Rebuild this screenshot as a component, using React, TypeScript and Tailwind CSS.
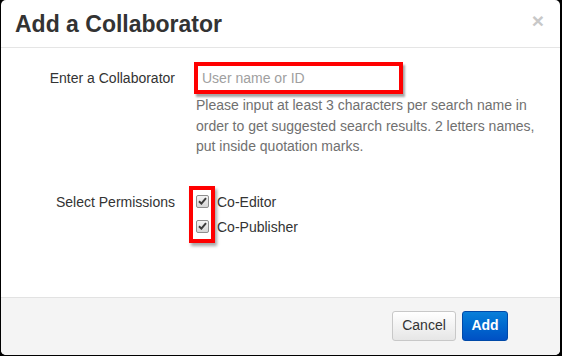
import React from "react"

function Check() {
  return (
    <span className="flex h-[13px] w-[13px] items-center justify-center rounded-[2px] border border-[#8e8e8e] bg-gradient-to-b from-[#f4f4f4] to-[#d6d6d6]">
      <svg width="9" height="8" viewBox="0 0 9 8">
        <path d="M1 4.2 L3.4 6.6 L8 1.2" fill="none" stroke="#3c3c3c" strokeWidth="2" />
      </svg>
    </span>
  )
}

export default function App() {
  return (
    <div className="h-[356px] w-[562px] bg-black pl-px pr-[2px] pb-px font-['Liberation_Sans',Arial,sans-serif] text-[14px] text-[#333]">
      <div className="flex h-full flex-col overflow-hidden rounded-[5px] bg-white">
        <div className="flex h-[48px] shrink-0 items-center justify-between border-b border-[#e5e5e5] pl-[14px] pr-[16px]">
          <h1 className="pt-[2px] text-[23px] font-bold text-[#333]">Add a Collaborator</h1>
          <span className="-mt-[6px] text-[21px] font-bold leading-none text-[#c8c8c8]">×</span>
        </div>

        <div className="flex-1 pt-[14px]">
          <div className="grid grid-cols-[174px_1fr] gap-x-[19px]">
            <div className="pt-[6px] text-right leading-[20px]">Enter a Collaborator</div>
            <div>
              <div className="h-[32px] w-[209px] border-4 border-[#ff0000] shadow-[2px_3px_2px_rgba(0,0,0,0.35)]">
                <input
                  className="h-full w-full bg-white px-[4px] text-[14px] text-[#333] outline-none placeholder:text-[#a0a0a0]"
                  placeholder="User name or ID"
                />
              </div>
              <p className="mt-[1px] pl-[2px] leading-[20.5px] text-[#707070]">
                Please input at least 3 characters per search name in
                <br />
                order to get suggested search results. 2 letters names,
                <br />
                put inside quotation marks.
              </p>
            </div>
          </div>

          <div className="mt-[29px] grid grid-cols-[174px_1fr] gap-x-[14px]">
            <div className="pt-[6px] text-right leading-[20px]">Select Permissions</div>
            <div className="flex items-start">
              <div className="flex w-[26px] flex-col items-center gap-[12px] border-4 border-[#ff0000] pt-[5px] pb-[6px] shadow-[2px_3px_3px_rgba(0,0,0,0.35)]">
                <Check />
                <Check />
              </div>
              <div className="flex flex-col pt-[6px] pl-[2px] leading-[20px]">
                <span>Co-Editor</span>
                <span className="mt-[5px]">Co-Publisher</span>
              </div>
            </div>
          </div>
        </div>

        <div className="flex h-[58px] shrink-0 items-center justify-end gap-[6px] border-t border-[#e2e2e2] bg-[#f4f4f4] pr-[52px] pb-[2px]">
          <button className="h-[30px] w-[64px] rounded-[3px] border border-[#c8c8c8] bg-gradient-to-b from-white to-[#e6e6e6] text-[14px] text-[#333]">
            Cancel
          </button>
          <button className="h-[30px] w-[46px] rounded-[3px] border border-[#0049a8] bg-gradient-to-b from-[#0a7fd9] to-[#0050c4] text-[14px] font-bold text-white">
            Add
          </button>
        </div>
      </div>
    </div>
  )
}
